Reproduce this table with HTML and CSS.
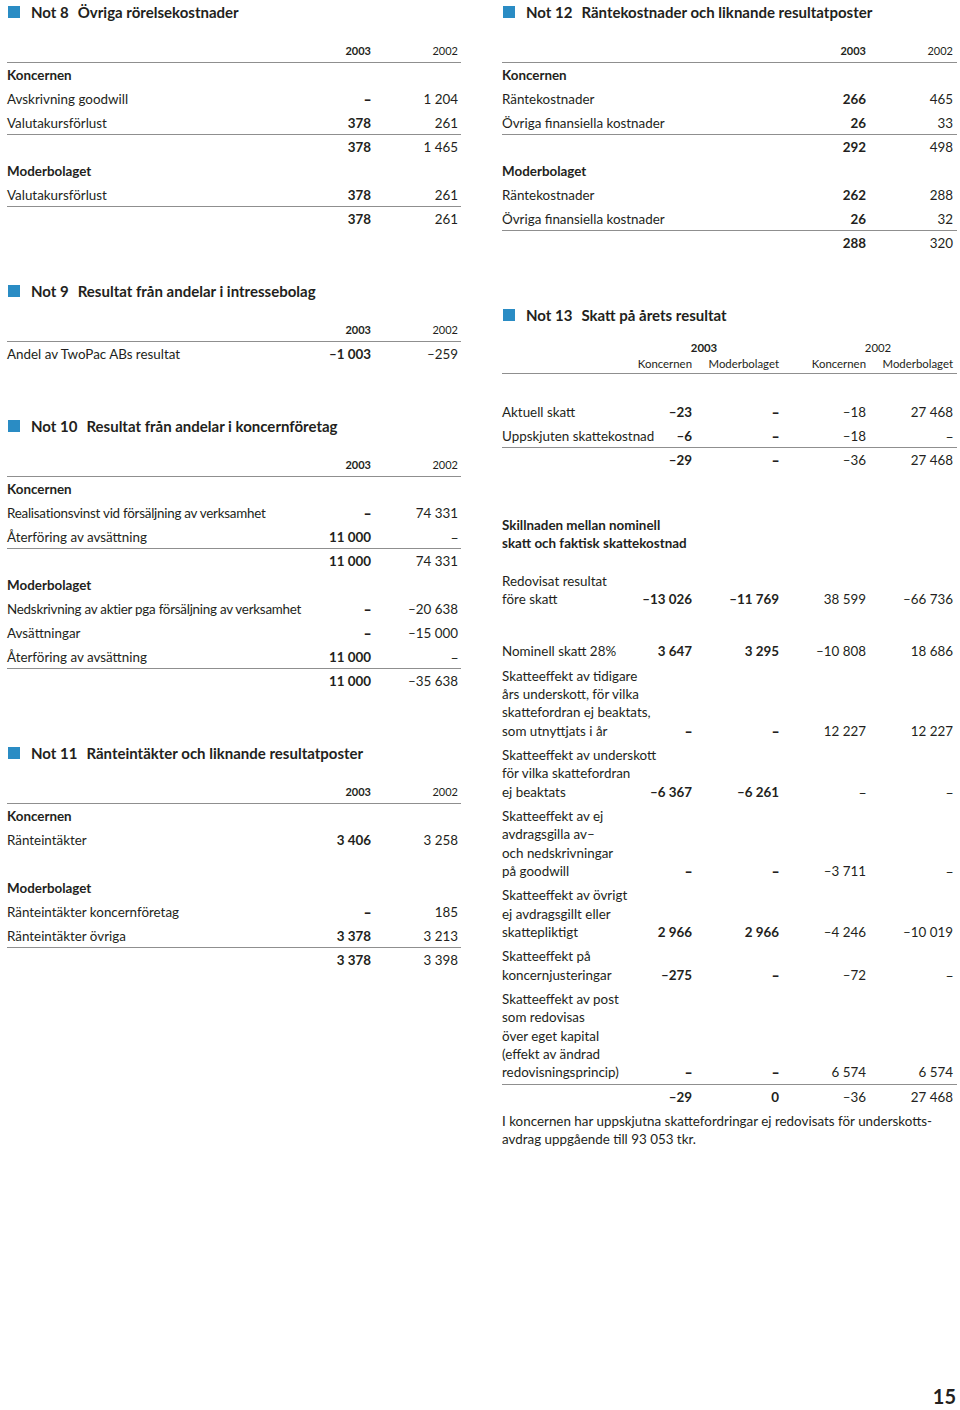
FILE: index.html
```html
<!DOCTYPE html>
<html lang="sv">
<head>
<meta charset="utf-8">
<title>Noter 8–13</title>
<link rel="stylesheet" href="styles.css">
</head>
<body>
<div class="page">
  <div class="col col-left">
    <section class="note">
      <h2 class="note-title"><span class="sq"></span><span class="no">Not 8</span>Övriga rörelsekostnader</h2>
      <div class="tbl c2">
        <div class="row yrs rule"><span></span><span>2003</span><span>2002</span></div>
        <div class="row"><span class="lbl grp">Koncernen</span></div>
        <div class="row"><span class="lbl">Avskrivning goodwill</span><span class="d">–</span><span>1&nbsp;204</span></div>
        <div class="row rule"><span class="lbl">Valutakursförlust</span><span>378</span><span>261</span></div>
        <div class="row"><span></span><span>378</span><span>1&nbsp;465</span></div>
        <div class="row"><span class="lbl grp">Moderbolaget</span></div>
        <div class="row rule"><span class="lbl">Valutakursförlust</span><span>378</span><span>261</span></div>
        <div class="row"><span></span><span>378</span><span>261</span></div>
      </div>
    </section>

    <section class="note">
      <h2 class="note-title"><span class="sq"></span><span class="no">Not 9</span>Resultat från andelar i intressebolag</h2>
      <div class="tbl c2">
        <div class="row yrs rule"><span></span><span>2003</span><span>2002</span></div>
        <div class="row"><span class="lbl">Andel av TwoPac ABs resultat</span><span>–1&nbsp;003</span><span>–259</span></div>
      </div>
    </section>

    <section class="note">
      <h2 class="note-title"><span class="sq"></span><span class="no">Not 10</span>Resultat från andelar i koncernföretag</h2>
      <div class="tbl c2">
        <div class="row yrs rule"><span></span><span>2003</span><span>2002</span></div>
        <div class="row"><span class="lbl grp">Koncernen</span></div>
        <div class="row"><span class="lbl cond">Realisationsvinst vid försäljning av verksamhet</span><span class="d">–</span><span>74&nbsp;331</span></div>
        <div class="row rule"><span class="lbl">Återföring av avsättning</span><span>11&nbsp;000</span><span class="d">–</span></div>
        <div class="row"><span></span><span>11&nbsp;000</span><span>74&nbsp;331</span></div>
        <div class="row"><span class="lbl grp">Moderbolaget</span></div>
        <div class="row"><span class="lbl cond">Nedskrivning av aktier pga försäljning av verksamhet</span><span class="d">–</span><span>–20&nbsp;638</span></div>
        <div class="row"><span class="lbl">Avsättningar</span><span class="d">–</span><span>–15&nbsp;000</span></div>
        <div class="row rule"><span class="lbl">Återföring av avsättning</span><span>11&nbsp;000</span><span class="d">–</span></div>
        <div class="row"><span></span><span>11&nbsp;000</span><span>–35&nbsp;638</span></div>
      </div>
    </section>

    <section class="note">
      <h2 class="note-title"><span class="sq"></span><span class="no">Not 11</span>Ränteintäkter och liknande resultatposter</h2>
      <div class="tbl c2">
        <div class="row yrs rule"><span></span><span>2003</span><span>2002</span></div>
        <div class="row"><span class="lbl grp">Koncernen</span></div>
        <div class="row"><span class="lbl">Ränteintäkter</span><span>3&nbsp;406</span><span>3&nbsp;258</span></div>
        <div class="row"><span>&nbsp;</span></div>
        <div class="row"><span class="lbl grp">Moderbolaget</span></div>
        <div class="row"><span class="lbl">Ränteintäkter koncernföretag</span><span class="d">–</span><span>185</span></div>
        <div class="row rule"><span class="lbl">Ränteintäkter övriga</span><span>3&nbsp;378</span><span>3&nbsp;213</span></div>
        <div class="row"><span></span><span>3&nbsp;378</span><span>3&nbsp;398</span></div>
      </div>
    </section>
  </div>

  <div class="col col-right">
    <section class="note">
      <h2 class="note-title"><span class="sq"></span><span class="no">Not 12</span>Räntekostnader och liknande resultatposter</h2>
      <div class="tbl c2 wide">
        <div class="row yrs rule"><span></span><span>2003</span><span>2002</span></div>
        <div class="row"><span class="lbl grp">Koncernen</span></div>
        <div class="row"><span class="lbl">Räntekostnader</span><span>266</span><span>465</span></div>
        <div class="row rule"><span class="lbl">Övriga finansiella kostnader</span><span>26</span><span>33</span></div>
        <div class="row"><span></span><span>292</span><span>498</span></div>
        <div class="row"><span class="lbl grp">Moderbolaget</span></div>
        <div class="row"><span class="lbl">Räntekostnader</span><span>262</span><span>288</span></div>
        <div class="row rule"><span class="lbl">Övriga finansiella kostnader</span><span>26</span><span>32</span></div>
        <div class="row"><span></span><span>288</span><span>320</span></div>
      </div>
    </section>

    <section class="note note-13">
      <h2 class="note-title"><span class="sq"></span><span class="no">Not 13</span>Skatt på årets resultat</h2>
      <div class="t4-head">
        <span></span><span class="yr yr-bold">2003</span><span class="yr">2002</span>
        <span></span><span>Koncernen</span><span>Moderbolaget</span><span>Koncernen</span><span>Moderbolaget</span>
      </div>
      <div class="tbl t4 first">
        <div class="row"><span class="lbl">Aktuell skatt</span><span>–23</span><span class="d">–</span><span>–18</span><span>27&nbsp;468</span></div>
        <div class="row rule"><span class="lbl">Uppskjuten skattekostnad</span><span>–6</span><span class="d">–</span><span>–18</span><span class="d">–</span></div>
        <div class="row"><span></span><span>–29</span><span class="d">–</span><span>–36</span><span>27&nbsp;468</span></div>
      </div>

      <h3 class="sub-title">Skillnaden mellan nominell<br>skatt och faktisk skattekostnad</h3>

      <div class="tbl t4 dense">
        <div class="row spaced"><span class="lbl">Redovisat resultat<br>före skatt</span><span>–13&nbsp;026</span><span>–11&nbsp;769</span><span>38&nbsp;599</span><span>–66&nbsp;736</span></div>
        <div class="row"><span class="lbl">Nominell skatt 28%</span><span>3&nbsp;647</span><span>3&nbsp;295</span><span>–10&nbsp;808</span><span>18&nbsp;686</span></div>
        <div class="row"><span class="lbl">Skatteeffekt av tidigare<br>års underskott, för vilka<br>skattefordran ej beaktats,<br>som utnyttjats i år</span><span class="d">–</span><span class="d">–</span><span>12&nbsp;227</span><span>12&nbsp;227</span></div>
        <div class="row"><span class="lbl">Skatteeffekt av underskott<br>för vilka skattefordran<br>ej beaktats</span><span>–6&nbsp;367</span><span>–6&nbsp;261</span><span class="d">–</span><span class="d">–</span></div>
        <div class="row"><span class="lbl">Skatteeffekt av ej<br>avdragsgilla av–<br>och nedskrivningar<br>på goodwill</span><span class="d">–</span><span class="d">–</span><span>–3&nbsp;711</span><span class="d">–</span></div>
        <div class="row"><span class="lbl">Skatteeffekt av övrigt<br>ej avdragsgillt eller<br>skattepliktigt</span><span>2&nbsp;966</span><span>2&nbsp;966</span><span>–4&nbsp;246</span><span>–10&nbsp;019</span></div>
        <div class="row"><span class="lbl">Skatteeffekt på<br>koncernjusteringar</span><span>–275</span><span class="d">–</span><span>–72</span><span class="d">–</span></div>
        <div class="row rule"><span class="lbl">Skatteeffekt av post<br>som redovisas<br>över eget kapital<br>(effekt av ändrad<br>redovisningsprincip)</span><span class="d">–</span><span class="d">–</span><span>6&nbsp;574</span><span>6&nbsp;574</span></div>
        <div class="row"><span></span><span>–29</span><span>0</span><span>–36</span><span>27&nbsp;468</span></div>
      </div>
      <p class="foot-note">I koncernen har uppskjutna skattefordringar ej redovisats för underskotts-<br>avdrag uppgående till 93&nbsp;053 tkr.</p>
    </section>
  </div>
</div>
<footer class="page-no">15</footer>
</body>
</html>
```

FILE: styles.css
```css
* {
  box-sizing: border-box;
  margin: 0;
  padding: 0;
}

body {
  width: 960px;
  min-height: 1410px;
  display: flex;
  flex-direction: column;
  font-family: Lato, "Liberation Sans", sans-serif;
  font-size: 13.4px;
  color: #231f20;
  background: #fff;
}

.page {
  display: flex;
  gap: 41px;
  padding: 0 3px 0 7px;
}

.col {
  display: flex;
  flex-direction: column;
}

.col-left { width: 454px; }
.col-right { width: 455px; }

.note + .note { margin-top: 48px; }

.note-title {
  display: flex;
  align-items: center;
  height: 24px;
  font-size: 15px;
  font-weight: 700;
  white-space: nowrap;
}

.sq {
  width: 12px;
  height: 12px;
  background: #2a8cc4;
  margin: 0 11px 0 1px;
  flex: none;
}

.no { margin-right: 9px; }

.tbl { margin-top: 15px; }

.row {
  display: grid;
  grid-template-columns: minmax(0, 1fr) 87px 87px;
  padding: 3px 3px 2px 0;
  border-bottom: 1px solid transparent;
  line-height: 18px;
}

.row.rule { border-bottom-color: #8f8f8f; }

.row > span { align-self: end; }
.row > span:not(:first-child) { text-align: right; }

.c2 .row > span:nth-child(2) { font-weight: 700; }

.lbl { white-space: nowrap; }
.grp { font-weight: 700; }
.cond { letter-spacing: -0.25px; }

/* standalone dash: a little wider, as in the print layout */
.d { font-family: "Open Sans", Lato, sans-serif; }

.yrs { font-size: 11px; }

.wide .row { padding-right: 4px; }

/* Not 13 */
.t4-head {
  margin-top: 13px;
  display: grid;
  grid-template-columns: minmax(0, 1fr) 87px 87px 87px 87px;
  padding: 0 4px 1px 0;
  border-bottom: 1px solid #8f8f8f;
  font-size: 11.4px;
  line-height: 16px;
}

.t4-head > span { text-align: right; }
.t4-head .yr {
  grid-column: span 2;
  text-align: center;
  padding-left: 24px;
}
.t4-head .yr-bold { font-weight: 700; }

.t4 .row {
  grid-template-columns: minmax(0, 1fr) 87px 87px 87px 87px;
  padding-right: 4px;
}

.t4 .row > span:nth-child(2),
.t4 .row > span:nth-child(3) { font-weight: 700; }

.t4.first { margin-top: 26px; }

.sub-title {
  margin-top: 44px;
  font-size: 13.4px;
  font-weight: 700;
  line-height: 18.33px;
}

.t4.dense { margin-top: 16px; }
.t4.dense .row { line-height: 18.33px; }
.t4.dense .row.spaced { margin-bottom: 28px; }

.foot-note {
  margin-top: 3px;
  line-height: 18px;
}

.page-no {
  margin-top: auto;
  text-align: right;
  padding: 0 4px 2px 0;
  font-size: 20px;
  font-weight: 700;
  line-height: 24px;
}
```
